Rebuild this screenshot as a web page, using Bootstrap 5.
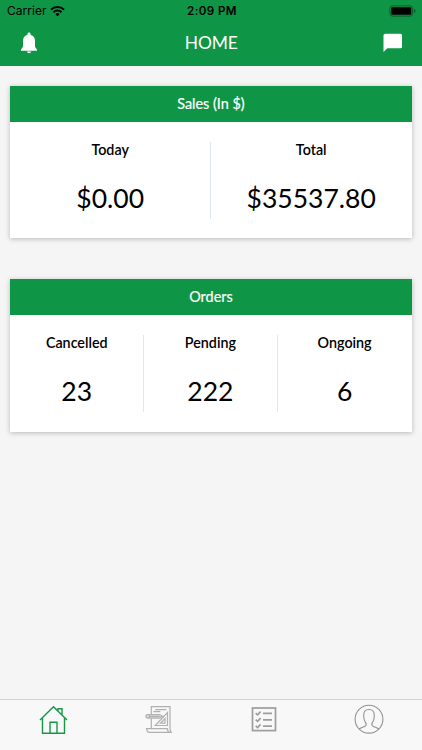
<!DOCTYPE html>
<html lang="en">
<head>
<meta charset="utf-8">
<meta name="viewport" content="width=device-width, initial-scale=1">
<title>Home</title>
<link href="https://cdn.jsdelivr.net/npm/bootstrap@5.3.0/dist/css/bootstrap.min.css" rel="stylesheet">
<style>
body{background:#f5f5f5;font-family:Lato,"Liberation Sans",sans-serif;color:#000;height:750px;overflow:hidden}
svg{display:block}
.app-top{background:#0f9546;height:66px}
.status-line{height:22px;font:13px/22px Inter,"Liberation Sans",sans-serif;padding:0 5px 0 7px}
.status-side{width:120px}
.status-time{font-weight:600;font-size:11.6px;letter-spacing:.4px}
.carrier{font-size:12px;letter-spacing:.02px}
.title-line{height:42px;padding:0 19.500px 0 18px}
.page-title{font-size:17.4px;line-height:42px;letter-spacing:-.1px}
.stats{gap:41px;padding:20px 10.500px 0 10.400px}
.stat-card{height:152.400px;border:0;border-radius:0;background:#fff;box-shadow:0 1px 5px rgba(0,0,0,.25)}
.stat-head{height:35.500px;line-height:35.500px;background:#0f9546;border:0;border-radius:0!important;padding:0;font-size:14.400px;-webkit-text-stroke:.2px}
.stat-body{padding:20px 0}
.stat-cell{height:77px}
.stat-cell:not(:last-child){border-right:1px solid #dbe9f7}
.stat-label{font-size:14.300px;line-height:16px;font-weight:600}
.stat-value{font-size:26.500px;line-height:32px;margin-top:24.500px}
.tabs{height:51px;background:#f8f8f8;border-top:1px solid #d2d2d2}
</style>
</head>
<body class="d-flex flex-column">
<header class="app-top text-white flex-shrink-0">
  <div class="status-line d-flex justify-content-between align-items-center text-black">
    <div class="status-side d-flex align-items-center gap-1">
      <span class="carrier">Carrier</span>
      <svg width="16" height="12" viewBox="0.500 0 16 12" fill="none" stroke="#000" stroke-width="2"><path d="M1.500 4.600a9.200 9.200 0 0 1 13 0M4 7.300a5.600 5.600 0 0 1 8 0"/><path d="M5.900 9.100a3 3 0 0 1 4.200 0L8 11.200z" fill="#000" stroke="none"/></svg>
    </div>
    <span class="status-time">2:09 PM</span>
    <div class="status-side d-flex justify-content-end">
      <svg width="28" height="12" viewBox="0 0 28 12"><rect x="1" y=".9" width="22.600" height="10.200" rx="2.400" fill="none" stroke="#075c2a"/><rect x="2.300" y="2.200" width="20" height="7.600" rx="1" fill="#000"/><path d="M25 4v4q1.500-.6 1.500-2T25 4" fill="#075c2a"/></svg>
    </div>
  </div>
  <div class="title-line d-flex justify-content-between align-items-center">
    <svg width="22" height="24" viewBox="0 0 22 24" fill="#fff"><path d="M11 1.600c-.9 0-1.600.6-1.600 1.500v.7C6.500 4.700 5 7 5 10v5.300c0 1.200-1.800 2.200-2 3.700v.7h16V19c-.2-1.500-2-2.500-2-3.700V10c0-3-1.500-5.300-4.400-6.200v-.7c0-.9-.7-1.500-1.600-1.500M8.800 20.600h4.400q-.4 1.700-2.200 1.700t-2.200-1.700"/></svg>
    <span class="page-title">HOME</span>
    <svg width="20" height="20" viewBox="0 0 20 20" fill="#fff"><path d="M2.500.8h15q1.500 0 1.500 1.500v11.500q0 1.500-1.500 1.500H4.300L.5 19V2.300Q.5.8 2.500.8"/></svg>
  </div>
</header>
<main class="stats d-flex flex-column flex-grow-1">
  <section class="card stat-card">
    <div class="card-header stat-head text-center text-white">Sales (In $)</div>
    <div class="stat-body">
      <div class="row g-0 text-center">
        <div class="col-6 stat-cell"><div class="stat-label">Today</div><div class="stat-value">$0.00</div></div>
        <div class="col-6 stat-cell"><div class="stat-label">Total</div><div class="stat-value">$35537.80</div></div>
      </div>
    </div>
  </section>
  <section class="card stat-card">
    <div class="card-header stat-head text-center text-white">Orders</div>
    <div class="stat-body">
      <div class="row g-0 text-center">
        <div class="col-4 stat-cell"><div class="stat-label">Cancelled</div><div class="stat-value">23</div></div>
        <div class="col-4 stat-cell"><div class="stat-label">Pending</div><div class="stat-value">222</div></div>
        <div class="col-4 stat-cell"><div class="stat-label">Ongoing</div><div class="stat-value">6</div></div>
      </div>
    </div>
  </section>
</main>
<nav class="tabs row g-0 flex-shrink-0" aria-label="Main">
  <div class="col-3 d-flex justify-content-center pt-1">
    <svg width="30" height="32" viewBox="-.5 0 30 32" fill="none" stroke="#189548" stroke-width="1.400"><path d="M1.500 16 15 2.700 28.500 16M4 13.700v15.500h22V13.700M11.500 29V18.300h7V29M19.500 7V4.700h4v6.400"/></svg>
  </div>
  <div class="col-3 d-flex justify-content-center pt-1">
    <svg width="30" height="32" viewBox="-.8 0 30 32" fill="none" stroke="#b0b0b0" stroke-width="1.200"><path d="M7.500 10V2.600h18.700v22.800l1.300 3H5.200q-2.200-.8-2.500-3.800h20.800q.2 3 2.400 3.700M7.500 14.700v9.700M11.500 5.700h11M9.500 7.700h7"/><path d="M3.300 10.500h12.500l3 1.700-3 1.900H3.300q-2.500-1.800 0-3.600M5.500 10.500v3.600M5.500 12.300h10.300" fill="#ddd"/><path d="M23.700 8.500v13H11.500zM21.200 14.500v4.600h-4.500z"/></svg>
  </div>
  <div class="col-3 d-flex justify-content-center pt-1">
    <svg width="30" height="32" viewBox="0 0 30 32" fill="none" stroke="#9d9d9d" stroke-width="1.700"><rect x="3.500" y="4" width="23" height="22.600"/><path d="m6.700 9.200 1.900 1.700 3-3.200M6.700 15.600l1.900 1.700 3-3.200M6.700 21.900l1.900 1.700 3-3.200M14 9.400h9M14 15.800h9M14 22.100h9"/></svg>
  </div>
  <div class="col-3 d-flex justify-content-center pt-1">
    <svg width="30" height="32" viewBox="0 0 30 32" fill="none" stroke="#929292" stroke-width="1.100"><circle cx="15" cy="15.200" r="13.900"/><path d="M5.300 25.100c1.100-1.300 4.700-2 6.200-3.200.9-.8.800-2.200 0-3.500-1.300-1.700-1.700-3.700-1.800-6.500-.1-4.500 1.600-6.400 5.300-6.400s5.400 1.900 5.300 6.400c-.1 2.800-.5 4.800-1.800 6.500-.8 1.300-.9 2.700 0 3.500 1.500 1.200 5.100 1.900 6.200 3.200"/></svg>
  </div>
</nav>
<script src="https://cdn.jsdelivr.net/npm/bootstrap@5.3.0/dist/js/bootstrap.bundle.min.js"></script>
</body>
</html>
